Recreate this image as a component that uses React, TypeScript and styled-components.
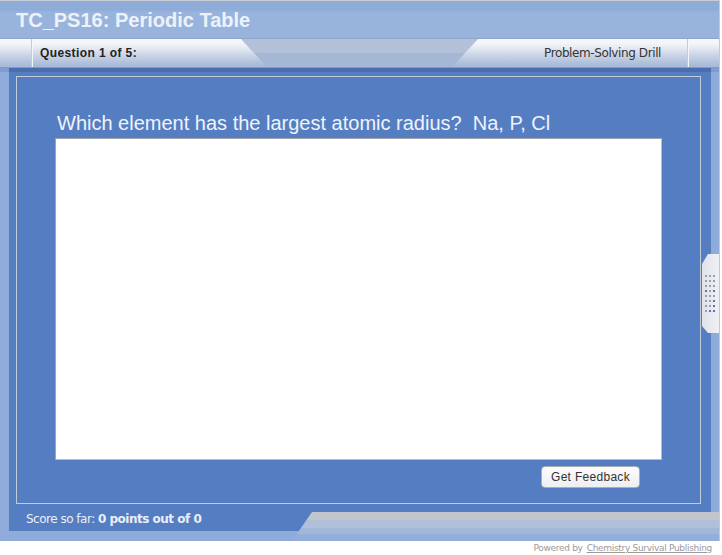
import React from "react";
import styled, { createGlobalStyle } from "styled-components";

const GlobalStyle = createGlobalStyle`
  html, body {
    margin: 0;
    padding: 0;
    background: #ffffff;
  }
`;

const Page = styled.div`
  width: 722px;
  height: 555px;
  display: flex;
  flex-direction: column;
`;

const Frame = styled.div`
  position: relative;
  width: 720px;
  height: 541px;
  box-sizing: border-box;
  border-top: 1px solid #c9ced6;
  border-right: 1px solid #c4c9d2;
  background: #8eabd9;
  display: flex;
  flex-direction: column;
  overflow: hidden;
`;

const TitleBar = styled.div`
  height: 37px;
  box-sizing: border-box;
  padding: 8px 0 0 16px;
  background: linear-gradient(#8fabd8 0%, #8fabd8 25%, #99b4dc 30%, #99b4dc 100%);
  color: #edf2fa;
  font: bold 20px "Liberation Sans", Arial, sans-serif;
`;

const tabGradient = `linear-gradient(
  #8ea4ca 0px, #8ea4ca 1px,
  #f6f8fb 1px, #f1f4f9 6px,
  #e4e9f2 10px, #d6deec 14px,
  #c7d2e6 18px, #bac8df 22px,
  #adbedb 26px, #a6b8d6 29px,
  #8899bb 29px, #8899bb 30px
)`;

const TabBar = styled.div`
  position: relative;
  height: 30px;
  display: flex;
  background: linear-gradient(
    #8ea4ca 0px, #8ea4ca 1px,
    #b2c1d8 1px, #b2c1d8 15px,
    #a4b7d4 15px, #a4b7d4 29px,
    #8899bb 29px, #8899bb 30px
  );
`;

const LeftTab = styled.div`
  width: 268px;
  display: flex;
  align-items: center;
  background: ${tabGradient};
  clip-path: polygon(0 0, 240px 0, 268px 100%, 0 100%);
`;

const RightTab = styled.div`
  margin-left: auto;
  width: 268px;
  display: flex;
  align-items: center;
  justify-content: flex-end;
  background: ${tabGradient};
  clip-path: polygon(28px 0, 100% 0, 100% 100%, 0 100%);
`;

const Stub = styled.div`
  width: 31px;
  align-self: stretch;
  flex-shrink: 0;
`;

const Divider = styled.div`
  width: 1px;
  align-self: stretch;
  margin: 1px 0;
  background: #c3cad8;
  box-shadow: 1px 0 0 #f4f6fa;
`;

const TabLabel = styled.span<{ $bold?: boolean }>`
  padding: ${(p) => (p.$bold ? "0 0 0 8px" : "0 26px 0 0")};
  font: ${(p) => (p.$bold ? "bold 12px \"Liberation Sans\", Arial" : "12px \"DejaVu Sans\", Tahoma")}, sans-serif;
  letter-spacing: ${(p) => (p.$bold ? "0.4px" : "-0.4px")};
  color: ${(p) => (p.$bold ? "#222" : "#333")};
  white-space: nowrap;
`;

const Body = styled.div`
  flex: 1;
  display: flex;
`;

const SideStrip = styled.div<{ $w: number }>`
  width: ${(p) => p.$w}px;
  flex-shrink: 0;
  border-top: 4px solid #7f9cd0;
`;

const Panel = styled.div`
  flex: 1;
  background: #557ec2;
  border-top: 4px solid #4b6db0;
  display: flex;
  flex-direction: column;
  padding: 4px 10px 0 7px;
`;

const InnerBox = styled.div`
  height: 428px;
  box-sizing: border-box;
  border: 1px solid #c3cbd8;
  padding: 0 38px 0 38px;
  display: flex;
  flex-direction: column;
`;

const Question = styled.div`
  margin: 35px 0 0 2px;
  height: 26px;
  color: #eef3fb;
  font: 20px "Liberation Sans", Arial, sans-serif;
  white-space: pre;
`;

const AnswerArea = styled.div`
  height: 322px;
  box-sizing: border-box;
  background: #ffffff;
  border: 1px solid #b8bcc4;
  border-top-color: #a0a4ac;
  border-left-color: #a0a4ac;
`;

const ButtonRow = styled.div`
  display: flex;
  justify-content: flex-end;
  padding: 6px 22px 0 0;
`;

const FeedbackButton = styled.button`
  width: 99px;
  height: 22px;
  border: 1px solid #a9adb4;
  border-radius: 4px;
  background: linear-gradient(#fcfcfc, #eeeff1);
  color: #333;
  font: 12px "Liberation Sans", Arial, sans-serif;
  letter-spacing: 0.3px;
  padding: 0;
  cursor: pointer;
`;

const ScoreLine = styled.div`
  padding: 8px 0 0 10px;
  color: #e9eef8;
  font: 12px "DejaVu Sans", Tahoma, sans-serif;
  letter-spacing: -0.5px;
  & > b {
    font-weight: bold;
  }
`;

const BottomRule = styled.div`
  height: 10px;
`;

const FooterStripes = styled.div`
  position: absolute;
  right: 0;
  bottom: 0;
  width: 427px;
  height: 29px;
  background: linear-gradient(
    #c2c5cc 0px, #c2c5cc 8px,
    #b1c0da 8px, #b1c0da 16px,
    #a3b7d9 16px, #a3b7d9 22px,
    #93aedb 22px, #93aedb 29px
  );
  clip-path: polygon(20px 0, 100% 0, 100% 100%, 0 100%);
`;

const Handle = styled.div`
  position: absolute;
  right: 0;
  top: 253px;
  width: 17px;
  height: 79px;
  background: linear-gradient(90deg, #dfe3ea, #eef0f4);
  clip-path: polygon(6px 0, 100% 0, 100% 100%, 6px 100%, 0 calc(100% - 7px), 0 10px);
  display: grid;
  grid-template-columns: repeat(3, 2px);
  grid-auto-rows: 2px;
  column-gap: 2px;
  row-gap: 3px;
  align-content: start;
  padding: 21px 0 0 3px;
  box-sizing: border-box;
`;

const Dot = styled.span<{ $blue?: boolean }>`
  background: ${(p) => (p.$blue ? "#5a78b0" : "#9a9ea6")};
`;

const PoweredBy = styled.div`
  height: 14px;
  display: flex;
  justify-content: flex-end;
  align-items: center;
  padding-right: 10px;
  color: #9a9a9a;
  font: 9px "DejaVu Sans", Verdana, sans-serif;
  letter-spacing: -0.3px;
  & > a {
    color: #9a9a9a;
    text-decoration: underline;
    margin-left: 4px;
  }
`;

const blueDots = new Set([9, 11, 17, 20, 22, 23]);

export default function App() {
  return (
    <Page>
      <GlobalStyle />
      <Frame>
        <TitleBar>TC_PS16: Periodic Table</TitleBar>
        <TabBar>
          <LeftTab>
            <Stub />
            <Divider />
            <TabLabel $bold>Question 1 of 5:</TabLabel>
          </LeftTab>
          <RightTab>
            <TabLabel>Problem-Solving Drill</TabLabel>
            <Divider />
            <Stub />
          </RightTab>
        </TabBar>
        <Body>
          <SideStrip $w={9} />
          <Panel>
            <InnerBox>
              <Question>Which element has the largest atomic radius?  Na, P, Cl</Question>
              <AnswerArea />
              <ButtonRow>
                <FeedbackButton>Get Feedback</FeedbackButton>
              </ButtonRow>
            </InnerBox>
            <ScoreLine>
              Score so far: <b>0 points out of 0</b>
            </ScoreLine>
          </Panel>
          <SideStrip $w={8} />
        </Body>
        <BottomRule />
        <FooterStripes />
        <Handle>
          {Array.from({ length: 24 }).map((_, i) => (
            <Dot key={i} $blue={blueDots.has(i)} />
          ))}
        </Handle>
      </Frame>
      <PoweredBy>
        Powered by <a>Chemistry Survival Publishing</a>
      </PoweredBy>
    </Page>
  );
}
